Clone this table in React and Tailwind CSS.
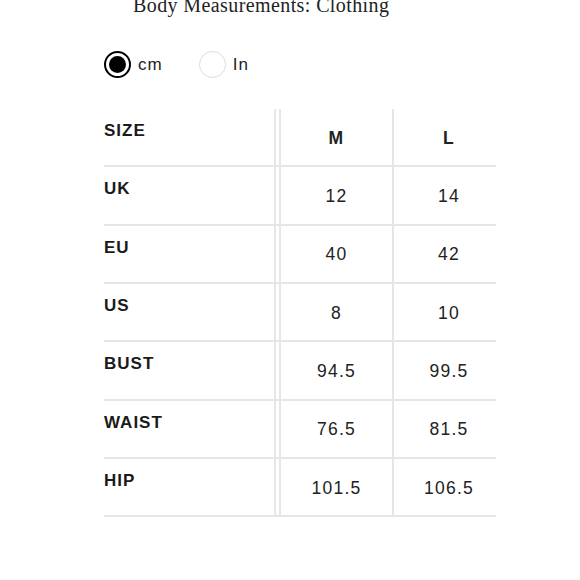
import React, { useState } from "react";

const rows = [
  { label: "UK", m: "12", l: "14" },
  { label: "EU", m: "40", l: "42" },
  { label: "US", m: "8", l: "10" },
  { label: "BUST", m: "94.5", l: "99.5" },
  { label: "WAIST", m: "76.5", l: "81.5" },
  { label: "HIP", m: "101.5", l: "106.5" },
];

function Radio({ checked, label, onClick }) {
  return (
    <button type="button" onClick={onClick} className="flex items-center gap-[7px]">
      <span
        className={
          checked
            ? "w-[27px] h-[27px] rounded-full border-2 border-black flex items-center justify-center"
            : "w-[27px] h-[27px] rounded-full border-[1.5px] border-[#dcdcdc]"
        }
      >
        {checked && <span className="w-[17px] h-[17px] rounded-full bg-black" />}
      </span>
      <span className="text-[17px] tracking-[1px] text-[#222]">{label}</span>
    </button>
  );
}

function Row({ label, m, l, header }) {
  return (
    <div className="flex h-[58.33px] border-b-2 border-[#e6e6e6]">
      <div className="w-[172px] border-r-2 border-[#e6e6e6] pt-[9px] text-[17px] font-bold tracking-[1px] text-[#1a1a1a]">
        {label}
      </div>
      <div
        className={
          "ml-[3px] w-[115px] border-l-2 border-r-2 border-[#e6e6e6] flex items-center justify-center text-[17.5px] tracking-[1.2px] text-[#222] " +
          (header ? "font-bold pt-[2px]" : "pt-[1px]")
        }
      >
        {m}
      </div>
      <div
        className={
          "flex-1 pl-[8px] flex items-center justify-center text-[17.5px] tracking-[1.2px] text-[#222] " +
          (header ? "font-bold pt-[2px]" : "pt-[1px]")
        }
      >
        {l}
      </div>
    </div>
  );
}

export default function App() {
  const [unit, setUnit] = useState("cm");

  return (
    <div className="w-[580px] h-[580px] bg-white overflow-hidden font-['Liberation_Sans',Arial,sans-serif]">
      <h1 className="ml-[133px] -mt-[7px] text-[20px] leading-[24px] tracking-[0.4px] text-[#222] font-['Liberation_Serif','Times_New_Roman',serif]">
        Body Measurements: Clothing
      </h1>

      <div className="ml-[104px] mt-[34px] flex items-center gap-[36px]">
        <Radio checked={unit === "cm"} label="cm" onClick={() => setUnit("cm")} />
        <Radio checked={unit === "in"} label="In" onClick={() => setUnit("in")} />
      </div>

      <div className="ml-[104px] mt-[31px] w-[392px]">
        <Row label="SIZE" m="M" l="L" header />
        {rows.map((r) => (
          <Row key={r.label} {...r} />
        ))}
      </div>
    </div>
  );
}
